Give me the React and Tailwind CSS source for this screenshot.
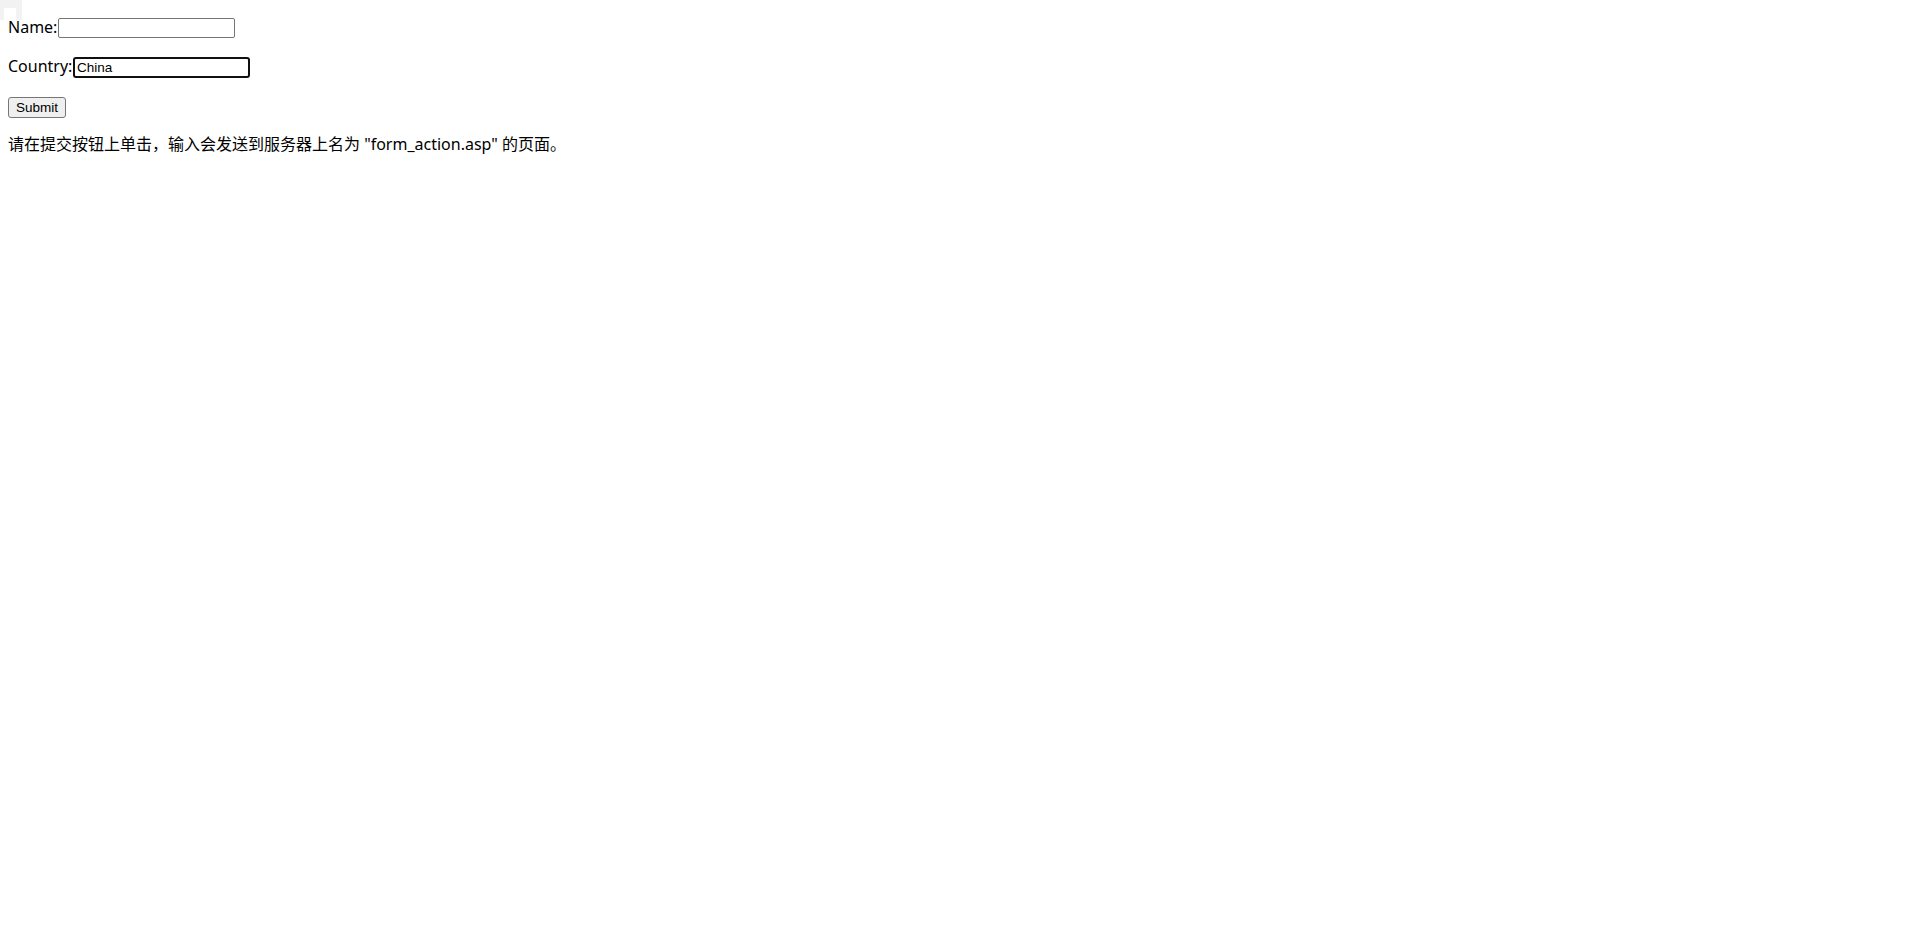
import React, { useEffect, useRef, useState } from "react";

const font = { fontFamily: '"Noto Sans", "Noto Sans CJK SC", sans-serif' };
const controlFont = { fontFamily: '"Liberation Sans", Arial, sans-serif' };

export default function App() {
  const [name, setName] = useState("");
  const [country, setCountry] = useState("China");
  const countryRef = useRef(null);

  useEffect(() => {
    countryRef.current?.focus();
  }, []);

  return (
    <div className="relative min-h-screen bg-white text-black" style={font}>
      {/* faint placeholder square in the corner */}
      <div className="absolute left-0 top-0 w-[22px] h-[20px] bg-[#f2f2f2]">
        <div className="absolute left-[4px] top-[8px] w-[12px] h-[12px] bg-white" />
      </div>

      <form
        action="form_action.asp"
        method="get"
        onSubmit={(e) => e.preventDefault()}
        className="px-[8px] pt-[16px] text-[16px] leading-[23px]"
      >
        <p className="mb-[16px] h-[23px] flex items-start">
          <span className="w-[50px]">Name:</span>
          <input
            type="text"
            name="fname"
            value={name}
            onChange={(e) => setName(e.target.value)}
            className="mt-[2px] w-[177px] h-[20px] border border-[#767676] rounded-[2px] px-[2px] text-[13.33px] leading-none outline-none"
            style={controlFont}
          />
        </p>

        <p className="mb-[16px] h-[23px] flex items-start">
          <span className="w-[65px]">Country:</span>
          <input
            ref={countryRef}
            type="text"
            name="lname"
            value={country}
            onChange={(e) => setCountry(e.target.value)}
            className="mt-[2px] w-[177px] h-[21px] border-2 border-[#101010] rounded-[3px] px-[2px] text-[13.5px] leading-none outline-none"
            style={controlFont}
          />
        </p>

        <p className="mb-[16px] h-[23px] flex items-start">
          <button
            type="submit"
            className="mt-[3px] w-[58px] h-[21px] border border-[#767676] rounded-[3px] bg-[#efefef] text-[13.5px] leading-none"
            style={controlFont}
          >
            Submit
          </button>
        </p>

        <p>请在提交按钮上单击，输入会发送到服务器上名为 "form_action.asp" 的页面。</p>
      </form>
    </div>
  );
}
